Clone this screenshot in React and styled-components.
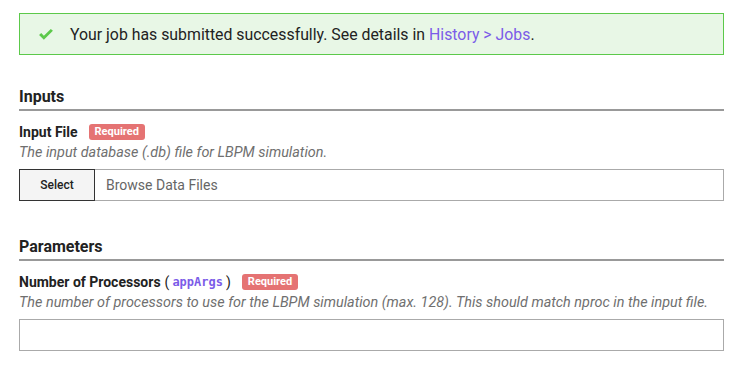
import React from "react";
import styled, { createGlobalStyle } from "styled-components";

const GlobalStyle = createGlobalStyle`
  html, body {
    margin: 0;
    padding: 0;
    background: #fff;
    font-family: Roboto, "Liberation Sans", sans-serif;
    color: #222;
    overflow: hidden;
  }
`;

//Page
const Page = styled.div`
  width: 705px;
  padding: 13px 0 0 19px;
  display: flex;
  flex-direction: column;
`;

//Success alert
const Alert = styled.div`
  height: 42px;
  box-sizing: border-box;
  border: 1px solid #5cc94a;
  background-color: #e8f7e6;
  display: flex;
  align-items: center;
  padding: 0 0 0 18px;
  gap: 16px;
  font-size: 15.85px;
  color: #222;

  a {
    color: #7b5ce8;
    text-decoration: none;
  }
`;

const Section = styled.section`
  display: flex;
  flex-direction: column;
  margin-top: ${({ $top }) => $top}px;
`;

const SectionTitle = styled.h3`
  margin: 0;
  font-size: 16px;
  font-weight: 700;
  line-height: 18px;
  padding-bottom: 3px;
  border-bottom: 2px solid #999;
`;

const Field = styled.div`
  display: flex;
  flex-direction: column;
  margin-top: ${({ $top }) => $top ?? 12}px;
`;

const LabelRow = styled.div`
  display: flex;
  align-items: center;
  font-size: 14px;
  font-weight: 700;
  line-height: 18px;
  color: #222;

  code {
    font-family: "DejaVu Sans Mono", monospace;
    font-size: 12px;
    font-weight: 700;
    color: #7b5ce8;
    padding: 0 3px;
  }
`;

const Paren = styled.span`
  font-weight: 400;
  margin-left: ${({ $open }) => ($open ? "4px" : "0")};
`;

const Badge = styled.span`
  margin-left: 11px;
  background-color: #e57373;
  color: #fff;
  font-size: 11px;
  font-weight: 700;
  line-height: 16px;
  padding: 0 6px;
  border-radius: 3px;
`;

const Description = styled.p`
  margin: 3px 0 0;
  font-size: 14.4px;
  font-style: italic;
  line-height: 18px;
  color: #6f6f6f;
`;

const InputGroup = styled.div`
  display: flex;
  height: 32px;
  margin-top: 7px;
  box-sizing: border-box;
`;

const SelectButton = styled.button`
  width: 76px;
  height: 32px;
  box-sizing: border-box;
  border: 1px solid #333;
  background-color: #f4f4f4;
  font-family: Roboto, "Liberation Sans", sans-serif;
  font-size: 12px;
  font-weight: 500;
  color: #222;
  padding: 0;
`;

const TextInput = styled.div`
  flex: 1;
  height: 32px;
  box-sizing: border-box;
  border: 1px solid #aaa;
  border-left: ${({ $joined }) => ($joined ? "none" : "1px solid #aaa")};
  display: flex;
  align-items: center;
  padding-left: 11px;
  font-size: 14px;
  color: #666;
`;

function CheckIcon() {
  return (
    <svg width="16" height="13" viewBox="0 0 15 12">
      <path d="M1 6.5 L5.5 11 L14 2.5 L12 0.8 L5.5 7.2 L3 4.6 Z" fill="#5cc94a" />
    </svg>
  );
}

function ArgLabel({ name, arg }) {
  return (
    <LabelRow>
      {name}
      <Paren $open>(</Paren>
      <code>{arg}</code>
      <Paren>)</Paren>
      <Badge>Required</Badge>
    </LabelRow>
  );
}

export default function App() {
  return (
    <>
      <GlobalStyle />
      <Page>
        <Alert>
          <CheckIcon />
          <span>
            Your job has submitted successfully. See details in{" "}
            <a href="#jobs">History &gt; Jobs</a>.
          </span>
        </Alert>

        <Section $top={33}>
          <SectionTitle>Inputs</SectionTitle>
          <Field>
            <LabelRow>
              Input File <Badge>Required</Badge>
            </LabelRow>
            <Description>The input database (.db) file for LBPM simulation.</Description>
            <InputGroup>
              <SelectButton>Select</SelectButton>
              <TextInput $joined>Browse Data Files</TextInput>
            </InputGroup>
          </Field>
        </Section>

        <Section $top={37}>
          <SectionTitle>Parameters</SectionTitle>
          <Field>
            <ArgLabel name="Number of Processors" arg="appArgs" />
            <Description>
              The number of processors to use for the LBPM simulation (max. 128). This should match nproc in the input file.
            </Description>
            <InputGroup>
              <TextInput />
            </InputGroup>
          </Field>
          <Field $top={21}>
            <ArgLabel name="Input Filename" arg="appArgs" />
          </Field>
        </Section>
      </Page>
    </>
  );
}
